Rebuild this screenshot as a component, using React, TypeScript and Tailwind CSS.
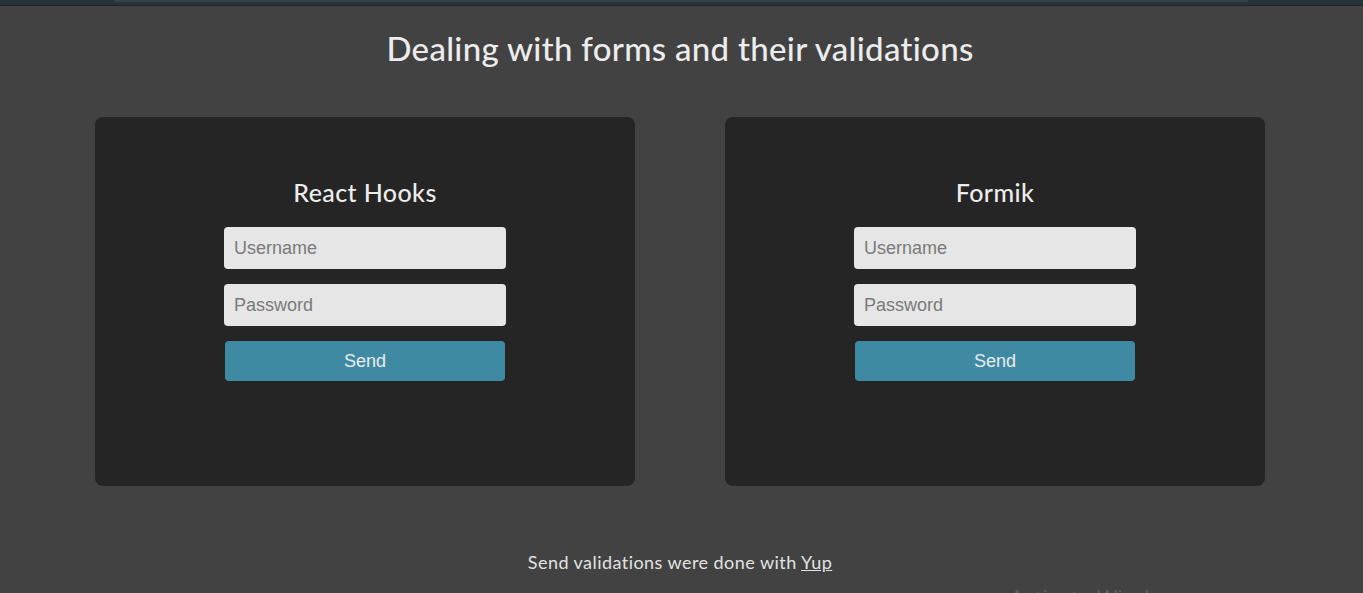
const FormCard = ({ title }: { title: string }) => {
  return (
    <div className="h-[369px] w-[540px] rounded-lg bg-[#252525] pt-[60px]">
      <div className="mx-auto flex w-[282px] flex-col items-center">
        <h2 className="h-[30px] text-[25px] leading-[30px] font-medium tracking-[0.4px] text-[#ececec]">{title}</h2>
        <input
          type="text"
          placeholder="Username"
          className="mt-[20px] h-[42px] w-[282px] rounded bg-[#e6e6e6] px-[10px] font-['Liberation_Sans',Arial,sans-serif] text-[18px] text-[#333] placeholder:text-[#7a7a7a] outline-none"
        />
        <input
          type="password"
          placeholder="Password"
          className="mt-[15px] h-[42px] w-[282px] rounded bg-[#e6e6e6] px-[10px] font-['Liberation_Sans',Arial,sans-serif] text-[18px] text-[#333] placeholder:text-[#7a7a7a] outline-none"
        />
        <button className="mt-[15px] h-[40px] w-[280px] rounded bg-[#3e8aa3] font-['Liberation_Sans',Arial,sans-serif] text-[18px] text-[#eaeaea]">
          Send
        </button>
      </div>
    </div>
  );
};

export default function App() {
  return (
    <div className="relative h-[593px] w-full overflow-hidden bg-[#424242] font-['Lato',sans-serif]">
      {/* top strip */}
      <div className="h-[6px] border-b border-[#1e2628] bg-[#263238]">
        <div className="mx-[115px] h-[2px] bg-[#34434a]" />
      </div>

      <div className="w-[1360px]">
        <h1 className="mt-[26px] text-center text-[33px] leading-[32px] font-medium tracking-[0.3px] text-[#ececec]">
          Dealing with forms and their validations
        </h1>

        <div className="mt-[53px] flex justify-center gap-[90px]">
          <FormCard title="React Hooks" />
          <FormCard title="Formik" />
        </div>

        <p className="mt-[64px] text-center text-[18px] leading-[24px] tracking-[0.45px] text-[#e2e2e2]">
          Send validations were done with <a href="#" className="underline">Yup</a>
        </p>
      </div>

      {/* windows watermark */}
      <div className="pointer-events-none absolute top-[581px] left-[1010px] font-['Open_Sans',sans-serif] text-[22px] text-[#5e5e5e]">
        Activate Windows
      </div>
    </div>
  );
}
